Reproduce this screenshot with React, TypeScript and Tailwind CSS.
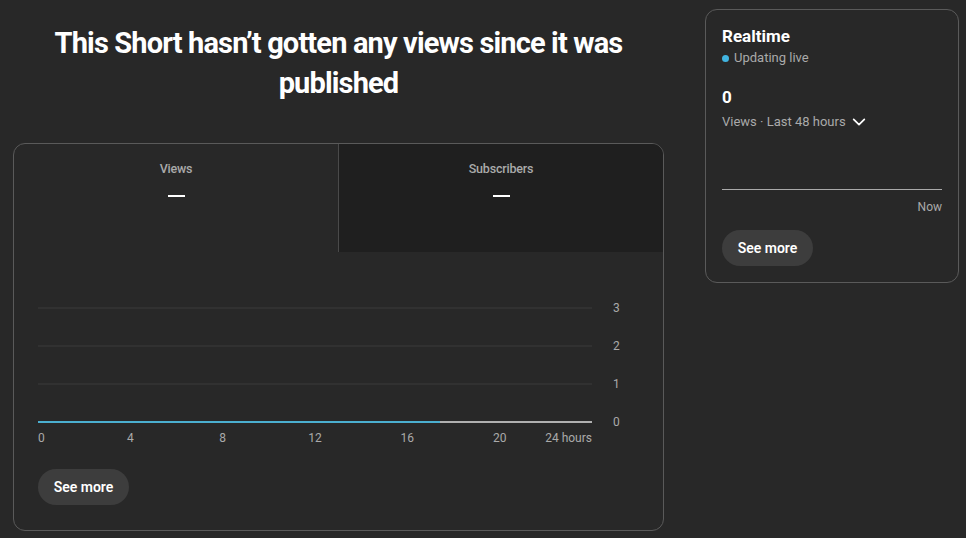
import React from "react";

const font = { fontFamily: "Roboto, 'Noto Sans', Arial, sans-serif" };

function ChevronDown() {
  return (
    <svg width="16" height="16" viewBox="0 0 24 24" fill="none" stroke="white" strokeWidth="2.6" strokeLinecap="round" strokeLinejoin="round">
      <path d="M4 8l8 8 8-8" />
    </svg>
  );
}

export default function App() {
  const xLabels = ["4", "8", "12", "16", "20"];
  return (
    <div className="w-[966px] h-[538px] bg-[#282828] overflow-hidden text-white flex" style={font}>
      {/* Left column */}
      <div className="w-[651px] ml-[13px] flex flex-col">
        <h1 className="mt-[23px] text-center text-[29px] leading-[40px] font-bold tracking-[-0.85px] px-[20px]">
          This Short hasn’t gotten any views since it was published
        </h1>
        <div className="mt-[40px] h-[388px] rounded-[12px] border border-[#5a5a5a] overflow-hidden flex flex-col">
          <div className="flex h-[108px]">
            <div className="flex-1 flex flex-col items-center pt-[16px] border-r border-[#4a4a4a]">
              <span className="text-[12.5px] leading-[18px] text-[#aaaaaa] font-medium tracking-[-0.2px]">Views</span>
              <span className="mt-[17px] w-[17px] h-[2px] bg-white" />
            </div>
            <div className="flex-1 flex flex-col items-center pt-[16px] bg-[#1f1f1f]">
              <span className="text-[12.5px] leading-[18px] text-[#aaaaaa] font-medium tracking-[-0.2px]">Subscribers</span>
              <span className="mt-[17px] w-[17px] h-[2px] bg-white" />
            </div>
          </div>
          <div className="px-[24px] pt-[37px]">
            {["3", "2", "1"].map((l) => (
              <div key={l} className="flex items-center h-[38px]">
                <div className="w-[554px] h-[2px] bg-[#313131]" />
                <span className="ml-[21px] text-[12px] text-[#aaaaaa]">{l}</span>
              </div>
            ))}
            <div className="flex items-center h-[38px]">
              <div className="w-[554px] flex h-[2px]">
                <div className="w-[402px] bg-[#4bafd0]" />
                <div className="flex-1 bg-[#b0b0b0]" />
              </div>
              <span className="ml-[21px] text-[12px] text-[#aaaaaa]">0</span>
            </div>
            <div className="relative w-[554px] h-[16px] -mt-[11px] grid grid-cols-6">
              <div className="text-[12px] leading-[16px] text-[#aaaaaa]">0</div>
              {xLabels.map((l, i) => (
                <div key={l} className="text-[12px] leading-[16px] text-[#aaaaaa] flex">
                  <span className="-translate-x-1/2">{l}</span>
                  {i === 4 && <span className="ml-auto">24 hours</span>}
                </div>
              ))}
            </div>
            <button className="mt-[23px] w-[91px] h-[36px] rounded-full bg-[#3d3d3d] text-[14px] font-semibold text-white">
              See more
            </button>
          </div>
        </div>
      </div>
      {/* Right column */}
      <div className="ml-[41px] mt-[9px] w-[254px] h-[274px] rounded-[12px] border border-[#5a5a5a] px-[16px] pt-[14px]">
        <div className="text-[17px] leading-[24px] font-bold">Realtime</div>
        <div className="flex items-center mt-[1px]">
          <span className="w-[7px] h-[7px] rounded-full bg-[#41b4e0]" />
          <span className="ml-[5px] text-[13px] leading-[18px] text-[#aaaaaa]">Updating live</span>
        </div>
        <div className="mt-[18px] text-[17px] leading-[24px] font-bold">0</div>
        <div className="flex items-center mt-[4px]">
          <span className="text-[13px] leading-[18px] text-[#aaaaaa]">Views · Last 48 hours</span>
          <span className="ml-[5px] flex"><ChevronDown /></span>
        </div>
        <div className="mt-[58px] h-px bg-[#aaaaaa]" />
        <div className="mt-[9px] text-right text-[12px] leading-[16px] text-[#aaaaaa]">Now</div>
        <button className="mt-[15px] w-[91px] h-[36px] rounded-full bg-[#3d3d3d] text-[14px] font-semibold text-white">
          See more
        </button>
      </div>
    </div>
  );
}
